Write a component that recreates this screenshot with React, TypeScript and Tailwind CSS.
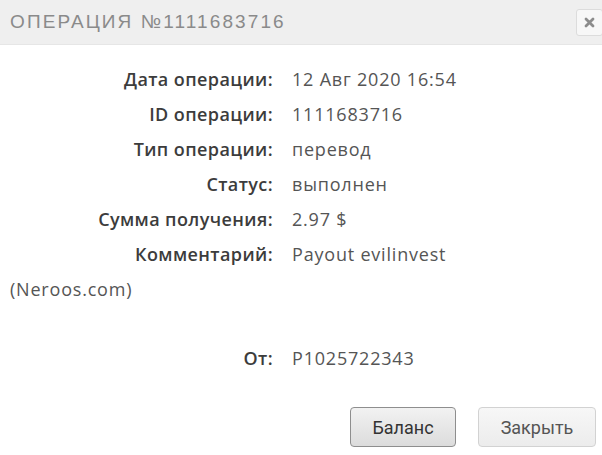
import React from "react";

const rows = [
  { label: "Дата операции:", value: "12 Авг 2020 16:54" },
  { label: "ID операции:", value: "1111683716" },
  { label: "Тип операции:", value: "перевод" },
  { label: "Статус:", value: "выполнен" },
  { label: "Сумма получения:", value: "2.97 $" },
  { label: "Комментарий:", value: "Payout evilinvest (Neroos.com)" },
];

function Row({ label, value }: { label: string; value: string }) {
  return (
    <div className="leading-[35px]">
      <span className="inline-block w-[263px] text-right font-semibold tracking-[0.4px] text-[#3c3c3c]">
        {label}
      </span>
      <span className="ml-[19px] text-[#555]">{value}</span>
    </div>
  );
}

function App() {
  return (
    <div className="w-[602px] h-[455px] bg-white overflow-hidden font-['Open_Sans',sans-serif]">
      <div className="h-[45px] bg-[#efefef] border-b border-[#e6e6e6] flex items-center justify-between pl-[10px]">
        <h1 className="text-[19px] tracking-[2.1px] text-[#8a8a8a] font-['Liberation_Sans',sans-serif]">
          ОПЕРАЦИЯ №1111683716
        </h1>
        <button className="w-[27px] h-[27px] mt-[1px] mr-[-1px] rounded-[3px] border border-[#dcdcdc] bg-[#f7f7f7] flex items-center justify-center">
          <svg width="11" height="11" viewBox="0 0 11 11">
            <path
              d="M2 2 L9 9 M9 2 L2 9"
              stroke="#8c8c8c"
              strokeWidth="2.8"
              strokeLinecap="round"
            />
          </svg>
        </button>
      </div>

      <div className="pl-[10px] pr-[110px] pt-[17px] text-[18px] tracking-[0.8px]">
        {rows.map((r) => (
          <Row key={r.label} label={r.label} value={r.value} />
        ))}
        <div className="mt-[34px]">
          <Row label="От:" value="P1025722343" />
        </div>
      </div>

      <div className="flex justify-end gap-[22px] pr-[6px] mt-[31px] font-['Roboto',sans-serif] text-[18px]">
        <button className="w-[106px] h-[40px] rounded-[4px] border border-[#8e8e8e] bg-gradient-to-b from-[#f2f2f2] to-[#dcdcdc] text-[#333]">
          Баланс
        </button>
        <button className="w-[118px] h-[40px] rounded-[4px] border border-[#d2d2d2] bg-gradient-to-b from-[#f7f7f7] to-[#ececec] text-[#555]">
          Закрыть
        </button>
      </div>
    </div>
  );
}

export default App;
